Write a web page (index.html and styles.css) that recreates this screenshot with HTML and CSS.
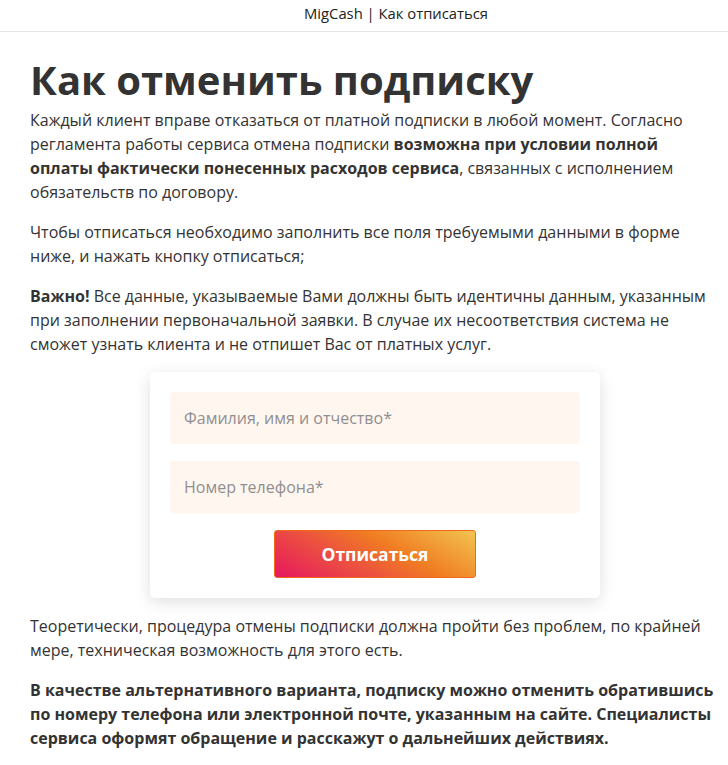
FILE: index.html
```html
<!DOCTYPE html>
<html lang="ru">
<head>
<meta charset="utf-8">
<title>MigCash | Как отписаться</title>
<link rel="stylesheet" href="styles.css">
</head>
<body>
<header class="topbar">MigCash | Как отписаться</header>
<main class="content">
  <h1 class="title">Как отменить подписку</h1>
  <p>Каждый клиент вправе отказаться от платной подписки в любой момент. Согласно регламента работы сервиса отмена подписки <b>возможна при условии полной оплаты фактически понесенных расходов сервиса</b>, связанных с исполнением обязательств по договору.</p>
  <p>Чтобы отписаться необходимо заполнить все поля требуемыми данными в форме ниже, и нажать кнопку отписаться;</p>
  <p><b>Важно!</b> Все данные, указываемые Вами должны быть идентичны данным, указанным при заполнении первоначальной заявки. В случае их несоответствия система не сможет узнать клиента и не отпишет Вас от платных услуг.</p>
  <form class="card">
    <input class="field" type="text" placeholder="Фамилия, имя и отчество*">
    <input class="field" type="text" placeholder="Номер телефона*">
    <button class="btn" type="button">Отписаться</button>
  </form>
  <p>Теоретически, процедура отмены подписки должна пройти без проблем, по крайней мере, техническая возможность для этого есть.</p>
  <p><b>В качестве альтернативного варианта, подписку можно отменить обратившись по номеру телефона или электронной почте, указанным на сайте. Специалисты сервиса оформят обращение и расскажут о дальнейших действиях.</b></p>
</main>
</body>
</html>
```

FILE: styles.css
```css
html, body {
  margin: 0;
  padding: 0;
  background: #fff;
}
body {
  font-family: "Open Sans", "Liberation Sans", sans-serif;
  color: #333;
  font-size: 16px;
  line-height: 24px;
}
.topbar {
  height: 31px;
  line-height: 26px;
  padding-left: 64px;
  text-align: center;
  font-size: 14.8px;
  color: #222;
  border-bottom: 1px solid #e6e6e6;
}
.content {
  padding: 0 14px 0 30px;
}
.title {
  margin: 22px 0 2px;
  font-size: 40px;
  line-height: 52px;
  font-weight: 700;
  color: #333;
}
p {
  margin: 0 0 16px;
}
b {
  font-weight: 700;
}
.card {
  width: 410px;
  margin: 15px 0 16px 120px;
  padding: 20px;
  background: #fff;
  border-radius: 5px;
  box-shadow: 0 4px 16px rgba(0, 0, 0, 0.13);
  display: flex;
  flex-direction: column;
  align-items: center;
  gap: 17px;
}
.field {
  box-sizing: border-box;
  width: 100%;
  height: 52px;
  border: none;
  border-radius: 4px;
  background: #fff6f0;
  padding: 0 14px;
  font-family: inherit;
  font-size: 16px;
  color: #333;
  outline: none;
}
.field::placeholder {
  color: #8f8f8f;
}
.btn {
  width: 202px;
  height: 48px;
  border: 1px solid #f06818;
  border-radius: 3px;
  background: linear-gradient(30deg, #e6175f 0%, #ec5040 35%, #f07c22 60%, #f2c450 100%);
  color: #fff;
  font-family: inherit;
  font-size: 17.5px;
  font-weight: 700;
  cursor: pointer;
}
```
